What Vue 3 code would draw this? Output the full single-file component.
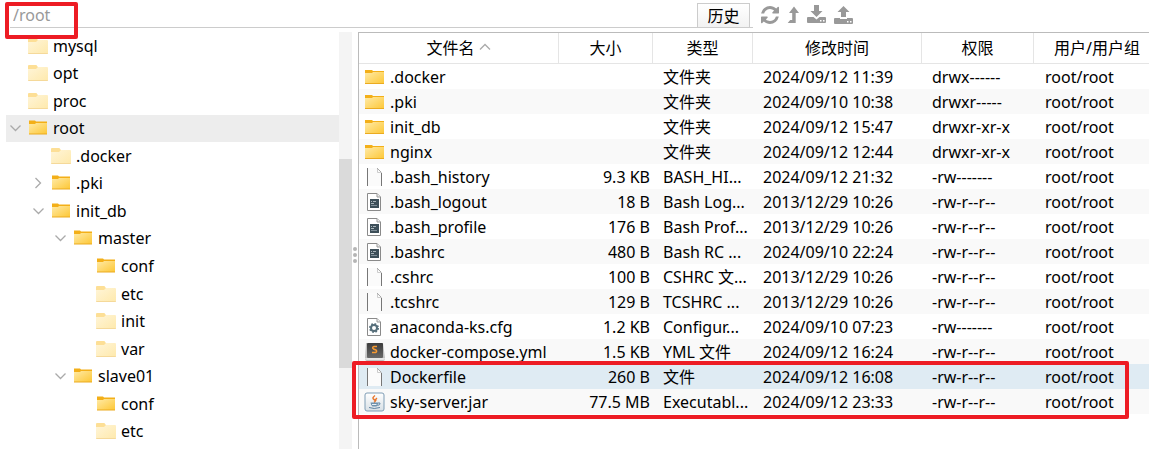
<script setup>
import { ref } from 'vue'

const path = ref('/root')

const tree = [
  { name: 'mysql', depth: 0, pale: true },
  { name: 'opt', depth: 0, pale: true },
  { name: 'proc', depth: 0, pale: true },
  { name: 'root', depth: 0, state: 'open', active: true },
  { name: '.docker', depth: 1, pale: true },
  { name: '.pki', depth: 1, state: 'closed' },
  { name: 'init_db', depth: 1, state: 'open' },
  { name: 'master', depth: 2, state: 'open' },
  { name: 'conf', depth: 3 },
  { name: 'etc', depth: 3, pale: true },
  { name: 'init', depth: 3, pale: true },
  { name: 'var', depth: 3, pale: true },
  { name: 'slave01', depth: 2, state: 'open' },
  { name: 'conf', depth: 3 },
  { name: 'etc', depth: 3, pale: true },
]

const files = [
  { icon: 'folder', name: '.docker', size: '', type: '文件夹', time: '2024/09/12 11:39', perm: 'drwx------' },
  { icon: 'folder', name: '.pki', size: '', type: '文件夹', time: '2024/09/10 10:38', perm: 'drwxr-----' },
  { icon: 'folder', name: 'init_db', size: '', type: '文件夹', time: '2024/09/12 15:47', perm: 'drwxr-xr-x' },
  { icon: 'folder', name: 'nginx', size: '', type: '文件夹', time: '2024/09/12 12:44', perm: 'drwxr-xr-x' },
  { icon: 'blank', name: '.bash_history', size: '9.3 KB', type: 'BASH_HI...', time: '2024/09/12 21:32', perm: '-rw-------' },
  { icon: 'script', name: '.bash_logout', size: '18 B', type: 'Bash Log...', time: '2013/12/29 10:26', perm: '-rw-r--r--' },
  { icon: 'script', name: '.bash_profile', size: '176 B', type: 'Bash Prof...', time: '2013/12/29 10:26', perm: '-rw-r--r--' },
  { icon: 'script', name: '.bashrc', size: '480 B', type: 'Bash RC ...', time: '2024/09/10 22:24', perm: '-rw-r--r--' },
  { icon: 'blank', name: '.cshrc', size: '100 B', type: 'CSHRC 文...', time: '2013/12/29 10:26', perm: '-rw-r--r--' },
  { icon: 'blank', name: '.tcshrc', size: '129 B', type: 'TCSHRC ...', time: '2013/12/29 10:26', perm: '-rw-r--r--' },
  { icon: 'config', name: 'anaconda-ks.cfg', size: '1.2 KB', type: 'Configur...', time: '2024/09/10 07:23', perm: '-rw-------' },
  { icon: 'sublime', name: 'docker-compose.yml', size: '1.5 KB', type: 'YML 文件', time: '2024/09/12 16:24', perm: '-rw-r--r--' },
  { icon: 'blank', name: 'Dockerfile', size: '260 B', type: '文件', time: '2024/09/12 16:08', perm: '-rw-r--r--', active: true },
  { icon: 'jar', name: 'sky-server.jar', size: '77.5 MB', type: 'Executabl...', time: '2024/09/12 23:33', perm: '-rw-r--r--' },
]
</script>

<template>
  <div class="manager">
    <svg class="defs" aria-hidden="true">
      <defs>
        <linearGradient id="gold" x1="0" y1="0" x2="1" y2="1">
          <stop offset="0" stop-color="#ffeaa6" /><stop offset="1" stop-color="#fdc735" />
        </linearGradient>
        <linearGradient id="cream" x1="0" y1="0" x2="1" y2="1">
          <stop offset="0" stop-color="#fff5d8" /><stop offset="1" stop-color="#fee9ac" />
        </linearGradient>
        <linearGradient id="key" x1="0" y1="0" x2="0" y2="1">
          <stop offset="0" stop-color="#3c3c3c" /><stop offset="1" stop-color="#686868" />
        </linearGradient>
        <linearGradient id="jarface" x1="0" y1="0" x2="0" y2="1">
          <stop offset="0" stop-color="#ffffff" /><stop offset="1" stop-color="#d8e0e6" />
        </linearGradient>
      </defs>
    </svg>

    <header class="toolbar">
      <div class="pathbar">
        <input v-model="path" class="path" type="text" aria-label="path" spellcheck="false">
        <button class="history" type="button">历史</button>
      </div>
      <div class="tools">
        <button type="button" aria-label="refresh">
          <svg width="18" height="18" viewBox="0 0 1536 1536"><path d="M1511 928q0 5-1 7-64 268-268 434.500t-478 166.500q-146 0-282.500-55t-243.500-157l-129 129q-19 19-45 19t-45-19-19-45v-448q0-26 19-45t45-19h448q26 0 45 19t19 45-19 45l-137 137q71 66 161 102t187 36q134 0 250-65t186-179q11-17 53-117 8-23 30-23h192q13 0 22.500 9.500t9.500 22.500zm25-800v448q0 26-19 45t-45 19h-448q-26 0-45-19t-19-45 19-45l138-138q-148-137-349-137-134 0-250 65t-186 179q-11 17-53 117-8 23-30 23h-199q-13 0-22.500-9.500t-9.500-22.500v-7q65-268 270-434.500t480-166.500q146 0 284 55.500t245 156.500l130-129q19-19 45-19t45 19 19 45z" /></svg>
        </button>
        <button type="button" aria-label="up">
          <svg width="12" height="18" viewBox="0 0 12 18"><path d="M7 .5 12 7H8.700V17H.7L3.200 14H5.200V7H2Z" /></svg>
        </button>
        <button type="button" aria-label="download">
          <svg width="19" height="18" viewBox="0 0 19 18"><path d="M7 -1H12V5H15.500L9.500 11 3.500 5H7Z" /><path fill-rule="evenodd" d="M1 11H6.500L9.500 13.500 12.500 11H18Q19 11 19 12V16Q19 17 18 17H1Q0 17 0 16V12Q0 11 1 11ZM13 14V15.500H14.500V14ZM16 14V15.500H17.500V14Z" /></svg>
        </button>
        <button type="button" aria-label="upload">
          <svg width="19" height="18" viewBox="0 0 19 18"><path d="M9.500 0 15.500 6H12V11H7V6H3.500Z" /><path fill-rule="evenodd" d="M1 12H6V13H13V12H18Q19 12 19 13V17Q19 18 18 18H1Q0 18 0 17V13Q0 12 1 12ZM13 15V16.500H14.500V15ZM16 15V16.500H17.500V15Z" /></svg>
        </button>
      </div>
      <div class="mark mark-path"></div>
    </header>

    <main class="body">
      <nav class="sidebar">
        <ul class="tree">
          <li v-for="(node, i) in tree" :key="i" :class="['node', 'depth-' + node.depth, { active: node.active }]">
            <button v-if="node.state" class="toggle" type="button" :aria-label="node.name">
              <svg width="12" height="12" viewBox="0 0 12 12">
                <path v-if="node.state === 'open'" d="M.5 3.500 5.500 8.500 10.500 3.500" />
                <path v-else d="M2.500 1 7.500 6 2.500 11" />
              </svg>
            </button>
            <span v-else class="toggle"></span>
            <svg width="20" height="18" viewBox="0 0 20 18">
              <template v-if="node.pale">
                <path fill="#fddf96" d="M0 2Q0 1 1 1H8Q9 1 9 2L10 3V6H0Z" />
                <path fill="url(#cream)" d="M0 5H8L10 3H19Q20 3 20 4V16Q20 17 19 17H1Q0 17 0 16Z" />
                <path fill="#f5d99a" d="M0 16H20Q20 17 19 17H1Q0 17 0 16Z" />
              </template>
              <template v-else>
                <path fill="#f3af18" d="M1 1.500H7L8 2.500H19V5H1Z" />
                <path fill="url(#gold)" d="M1 5H7L8 4H19V15H1Z" />
                <path fill="#ebab20" d="M1 14.500H19V15.500H1Z" />
              </template>
            </svg>
            <span class="label">{{ node.name }}</span>
          </li>
        </ul>
      </nav>
      <div class="scrollbar"><div class="thumb"></div></div>
      <div class="splitter"><i></i><i></i><i></i></div>

      <section class="listing">
        <table>
          <colgroup>
            <col class="c-name"><col class="c-size"><col class="c-type"><col class="c-time"><col class="c-perm"><col>
          </colgroup>
          <thead>
            <tr>
              <th>
                <button class="sort" type="button">文件名<svg width="12" height="12" viewBox="0 0 12 12"><path d="M1 7.500 6 2.500 11 7.500" /></svg></button>
              </th>
              <th>大小</th>
              <th>类型</th>
              <th>修改时间</th>
              <th>权限</th>
              <th class="owner">用户/用户组</th>
            </tr>
          </thead>
          <tbody>
            <tr v-for="file in files" :key="file.name" :class="{ active: file.active }">
              <td>
                <div class="file">
                  <svg width="22" height="20" viewBox="0 0 22 20">
                    <g v-if="file.icon === 'folder'">
                      <path fill="#f3af18" d="M1 3H8L9 4H20V7H1Z" />
                      <path fill="url(#gold)" d="M1 6H8L9 5H20V17H1Z" />
                      <path fill="#ebab20" d="M1 16H20V17H1Z" />
                    </g>
                    <g v-else-if="file.icon === 'blank'">
                      <path fill="#fbfbfb" d="M4 1H13L17 5V19H4Z" />
                      <path fill="none" stroke="#777" d="M3.500 1V19M17.500 6V19" />
                      <path fill="none" stroke="#aaa" d="M13 1 17.500 5.500" />
                      <path fill="none" stroke="#ccc" d="M13.500 2V5.500H17" />
                    </g>
                    <g v-else-if="file.icon === 'script'">
                      <path fill="#fff" stroke="#8a8a8a" d="M3.500 1.500H13L16.500 5V18.500H3.500Z" />
                      <path fill="#eee" stroke="#999" d="M13 1.500V5H16.500" />
                      <path fill="#3d4f59" d="M6 7H15V16H6Z" />
                      <path fill="none" stroke="#a9b4ba" d="M7 9.500H8M9 9.500H12M7 11.500H10" />
                      <path fill="none" stroke="#81909a" d="M7 13.500H13" />
                    </g>
                    <g v-else-if="file.icon === 'config'">
                      <path fill="#fff" stroke="#8a8a8a" d="M3.500 1.500H13L16.500 5V18.500H3.500Z" />
                      <path fill="#eee" stroke="#999" d="M13 1.500V5H16.500" />
                      <circle cx="10" cy="11" r="4" fill="none" stroke="#566e7a" stroke-width="2" stroke-dasharray="1.570 1.570" />
                      <circle cx="10" cy="11" r="3" fill="none" stroke="#566e7a" stroke-width="2" />
                    </g>
                    <g v-else-if="file.icon === 'sublime'">
                      <path fill="#c2c2c2" d="M2 1H19L21 16Q21 19 19 19H3Q1 19 1 16Z" />
                      <path fill="#e6e6e6" d="M1 16H21Q21 18 19 18H3Q1 18 1 16Z" />
                      <rect x="3" y="1" width="16" height="15" rx="1" fill="url(#key)" />
                      <path fill="none" stroke="#f79a32" stroke-width="1.500" d="M13 4.500 10 4.500Q7.500 5.500 9.500 7L12 8Q13.500 9.500 11.500 10.500L8 10.500" />
                    </g>
                    <g v-else>
                      <rect x="1" y="1" width="19" height="18" rx="2" fill="url(#jarface)" stroke="#7f9db5" />
                      <path fill="none" stroke="#e8762c" stroke-width="1.500" d="M11 3.500Q7.500 6 10 7.500T10 10.500M13 6Q11 7.500 12 9" />
                      <path fill="#6f91ad" d="M6.500 10.500H14V12Q13.500 14.500 12 14.500H8.500Q7 14 6.500 10.500Z" />
                      <path fill="none" stroke="#5f83a2" d="M14 11H16Q16.500 13 13.500 13.500M5 15.500Q10 17.500 16 15.500" />
                      <path fill="none" stroke="#e9f0f5" d="M8 12.500H12.500" />
                    </g>
                  </svg>
                  <span>{{ file.name }}</span>
                </div>
              </td>
              <td class="size">{{ file.size }}</td>
              <td>{{ file.type }}</td>
              <td>{{ file.time }}</td>
              <td>{{ file.perm }}</td>
              <td class="owner">root/root</td>
            </tr>
          </tbody>
        </table>
        <div class="mark mark-rows"></div>
      </section>
    </main>
  </div>
</template>

<style>
body {
  margin: 0;
  background: #fff;
}
</style>

<style scoped>
.manager {
  display: flex;
  flex-direction: column;
  min-height: 100vh;
  color: #000;
  font: 16px/24px "Noto Sans", "Noto Sans CJK SC", sans-serif;
}
.defs {
  position: absolute;
  width: 0;
  height: 0;
}
button {
  padding: 0;
  border: 0;
  background: none;
  color: inherit;
  font: inherit;
}
svg {
  display: block;
  flex: none;
  overflow: visible;
}
.toolbar {
  position: relative;
  display: flex;
  padding: 3px 0 4px 10px;
}
.pathbar {
  display: flex;
  flex: 1;
  padding-right: 3px;
  border-bottom: 1px solid #ccc;
}
.path {
  flex: 1;
  min-width: 0;
  padding: 0 3px;
  border: 0;
  outline: 0;
  background: none;
  color: #999;
  font: inherit;
}
.history {
  width: 53px;
  height: 24px;
  border: 1px solid #ccc;
  border-bottom: 0;
  background: linear-gradient(#fff, #f2f2f2);
}
.tools {
  display: flex;
  align-items: center;
  gap: 8px;
  width: 388px;
  padding: 0 0 2px 8px;
}
.tools svg {
  fill: #999;
}
.body {
  display: flex;
  flex: 1;
}
.sidebar {
  display: flex;
  width: 333px;
  padding: 0 0 4px 6px;
}
.tree {
  display: flex;
  flex: 1;
  flex-direction: column;
  margin: 0;
  padding: 0;
  list-style: none;
}
.node {
  display: flex;
  flex: 1;
  align-items: center;
  padding-left: 4px;
}
.node.active {
  background: #ededed;
}
.depth-1 {
  padding-left: 27px;
}
.depth-2 {
  padding-left: 49px;
}
.depth-3 {
  padding-left: 72px;
}
.toggle {
  width: 12px;
  margin-right: 6px;
}
.toggle path,
.sort path {
  fill: none;
  stroke: #aaa;
  stroke-width: 1.3;
}
.label {
  margin-left: 5px;
}
.scrollbar {
  width: 13px;
  background: #f4f4f4;
}
.thumb {
  height: 50%;
  margin-top: 127px;
  background: #dadada;
}
.splitter {
  display: flex;
  flex-direction: column;
  align-items: center;
  gap: 2px;
  width: 6px;
  padding-top: 215px;
}
.splitter i {
  width: 4px;
  height: 4px;
  border-radius: 50%;
  background: #b5b5b5;
}
.listing {
  position: relative;
  flex: 1;
  border: solid #bbb;
  border-width: 1px 0 0 1px;
}
table {
  width: 100%;
  border-spacing: 0;
  table-layout: fixed;
}
.c-name {
  width: 200px;
}
.c-size {
  width: 94px;
}
.c-type {
  width: 100px;
}
.c-time {
  width: 169px;
}
.c-perm {
  width: 112px;
}
th {
  height: 30px;
  padding: 0;
  border-right: 1px solid #e5e5e5;
  border-bottom: 1px solid #e5e5e5;
  font-weight: 400;
}
th.owner {
  padding-left: 11px;
  border-right: 0;
}
.sort {
  display: inline-flex;
  align-items: center;
  gap: 4px;
}
td {
  height: 25px;
  padding: 0 0 0 10px;
  white-space: nowrap;
}
td:first-child {
  padding-left: 5px;
}
td.size {
  padding: 0 3px 0 0;
  text-align: right;
}
td.owner {
  padding-left: 11px;
}
tbody tr:nth-child(even) {
  background: #f9f9f9;
}
tbody tr.active {
  background: #dfebf3;
}
.file {
  display: flex;
  align-items: center;
  gap: 4px;
}
.mark {
  position: absolute;
  border: 4px solid #ed1c24;
  border-radius: 2px;
  pointer-events: none;
}
.mark-path {
  top: 2px;
  left: 5px;
  z-index: 1;
  width: 65px;
  height: 29px;
}
.mark-rows {
  top: 328px;
  right: 20px;
  left: -7px;
  height: 50px;
}
</style>
